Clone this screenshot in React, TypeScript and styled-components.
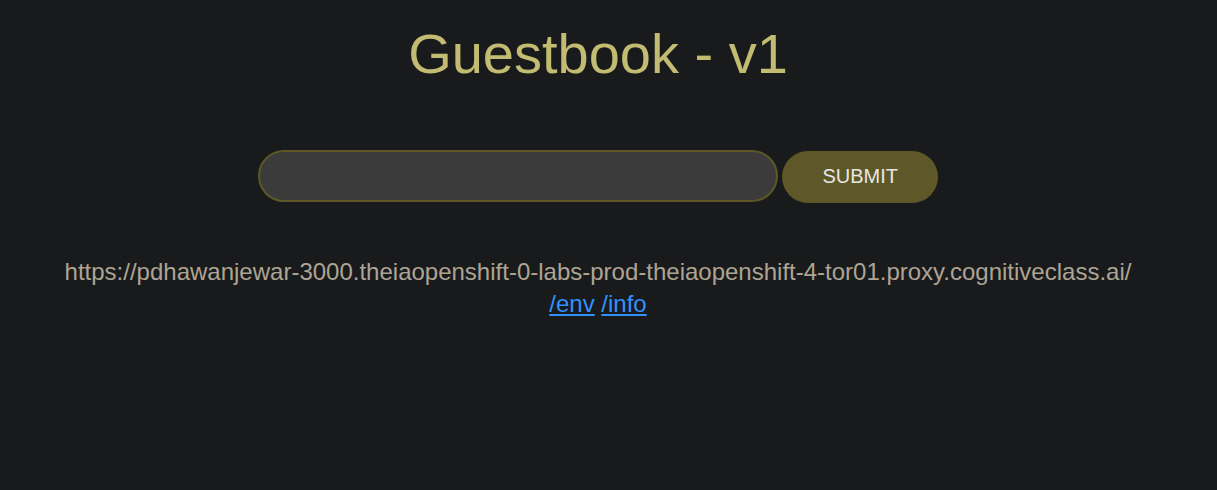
import React, { useState } from "react";
import styled, { createGlobalStyle } from "styled-components";

const GlobalStyle = createGlobalStyle`
  body {
    margin: 0;
    background: #181a1b;
    color: #aea494;
    font-family: "Liberation Sans", Arial, sans-serif;
    font-size: 24px;
    line-height: 32px;
  }
`;

const Page = styled.main`
  display: flex;
  flex-direction: column;
  align-items: center;
  padding: 22px 43px 22px 22px;
  text-align: center;
`;

const Title = styled.h1`
  margin: 0;
  color: #c2bb72;
  font-size: 56px;
  font-weight: 400;
  line-height: 64px;
`;

const EntryForm = styled.form`
  display: flex;
  align-items: baseline;
  justify-content: center;
  gap: 4px;
  width: 100%;
  max-width: 680px;
  margin-top: 64px;
`;

const EntryInput = styled.input`
  box-sizing: border-box;
  flex: 1;
  min-width: 0;
  height: 52px;
  padding: 0 20px;
  border: 2px solid #5e5828;
  border-radius: 26px;
  outline: none;
  background: #3b3b3b;
  color: #e8e6e3;
  font-family: inherit;
  font-size: 22px;
`;

const SubmitButton = styled.button`
  height: 52px;
  padding: 0 40px;
  border: none;
  border-radius: 26px;
  background: #5e5828;
  color: #e8e6e3;
  font-family: inherit;
  font-size: 20px;
  cursor: pointer;
`;

const Details = styled.section`
  margin-top: 53px;
  overflow-wrap: anywhere;
`;

const Address = styled.p`
  margin: 0;
`;

const Links = styled.nav``;

const PageLink = styled.a`
  color: #3391ff;
  text-decoration: underline;
`;

export default function App() {
  const [entry, setEntry] = useState("");

  return (
    <>
      <GlobalStyle />
      <Page>
        <Title>Guestbook - v1</Title>
        <EntryForm
          onSubmit={(event) => {
            event.preventDefault();
            setEntry("");
          }}
        >
          <EntryInput
            type="text"
            aria-label="Guestbook entry"
            autoComplete="off"
            value={entry}
            onChange={(event) => setEntry(event.target.value)}
          />
          <SubmitButton type="submit">SUBMIT</SubmitButton>
        </EntryForm>
        <Details>
          <Address>
            https://pdhawanjewar-3000.theiaopenshift-0-labs-prod-theiaopenshift-4-tor01.proxy.cognitiveclass.ai/
          </Address>
          <Links>
            <PageLink href="/env">/env</PageLink>{" "}
            <PageLink href="/info">/info</PageLink>
          </Links>
        </Details>
      </Page>
    </>
  );
}
